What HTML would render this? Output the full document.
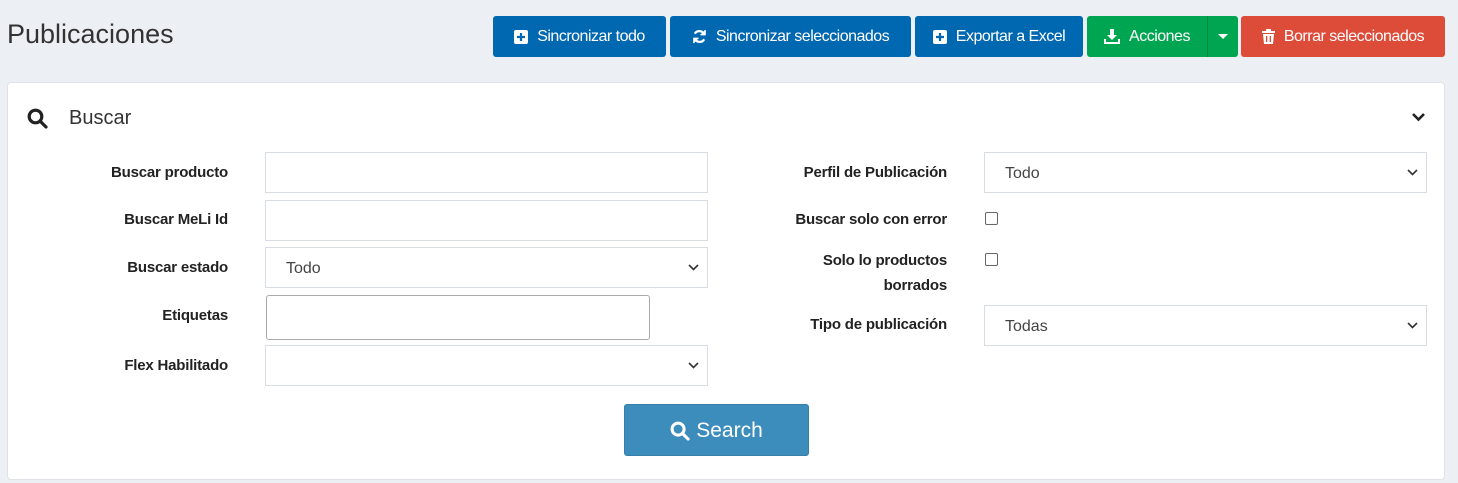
<!DOCTYPE html>
<html><head><meta charset="utf-8"><style>
*{box-sizing:border-box;margin:0;padding:0}
body{width:1458px;height:483px;background:#eceff4;font-family:"Liberation Sans",sans-serif;position:relative;overflow:hidden;color:#222}
.a{position:absolute}
.btn{position:absolute;top:16px;height:41px;color:#fff;font-size:16px;display:flex;align-items:center;justify-content:center;gap:9px;border-radius:3px;letter-spacing:-0.5px}
.blue{background:#0067b1}
.green{background:#00a551}
.red{background:#dd4b39}
.card{position:absolute;left:7px;top:82px;width:1438px;height:398px;background:#fff;border:1px solid #dfe3e8;border-radius:4px}
.lbl{position:absolute;font-weight:bold;font-size:15px;text-align:right;color:#222;letter-spacing:-0.2px;line-height:25px}
.inp{position:absolute;border:1px solid #d8dce3;background:#fff;font-size:16px;color:#444;padding-left:20px;display:flex;align-items:center}
.chev{position:absolute;right:8px;top:50%;margin-top:-4px}
.cb{position:absolute;width:13px;height:13px;border:1px solid #666;border-radius:2px;background:#fff}
</style></head><body>
<div class="a" style="left:7px;top:19px;font-size:27px;color:#333">Publicaciones</div>

<div class="btn blue" style="left:493px;width:173px"><svg width="14" height="14" viewBox="0 0 14 14"><rect width="14" height="14" rx="2" fill="#fff"/><path d="M7 3v8M3 7h8" stroke="#0067b1" stroke-width="2.2"/></svg>Sincronizar todo</div>
<div class="btn blue" style="left:670px;width:241px"><svg width="15" height="15" viewBox="0 0 16 16" fill="none" stroke="#fff" stroke-width="2.4"><path d="M13 6A5.5 5.5 0 0 0 3 5"/><path d="M3 10a5.5 5.5 0 0 0 10 1"/><path d="M14 1v5h-5" fill="#fff" stroke-width="1.5"/><path d="M2 15v-5h5" fill="#fff" stroke-width="1.5"/></svg>Sincronizar seleccionados</div>
<div class="btn blue" style="left:915px;width:168px"><svg width="14" height="14" viewBox="0 0 14 14"><rect width="14" height="14" rx="2" fill="#fff"/><path d="M7 3v8M3 7h8" stroke="#0067b1" stroke-width="2.2"/></svg>Exportar a Excel</div>
<div class="btn green" style="left:1087px;width:120px;border-radius:3px 0 0 3px"><svg width="16" height="15" viewBox="0 0 16 15" fill="#fff"><path d="M6 0h4v6h3l-5 5-5-5h3z"/><path d="M0 10h2v3h12v-3h2v5H0z"/></svg>Acciones</div>
<div class="btn green" style="left:1207px;width:31px;border-left:1px solid #00873f;border-radius:0 3px 3px 0"><svg width="10" height="6" viewBox="0 0 10 6"><path d="M0 0h10L5 5z" fill="#fff"/></svg></div>
<div class="btn red" style="left:1241px;width:204px"><svg width="13" height="15" viewBox="0 0 13 15" fill="#fff"><path d="M4 0h5v2h4v2H0V2h4z"/><path d="M1 5h11l-1 10H2zM4 7v6h1.3V7zm3.7 0v6H9V7z" fill-rule="evenodd"/></svg>Borrar seleccionados</div>

<div class="card"></div>
<svg class="a" style="left:27px;top:108px" width="21" height="21" viewBox="0 0 21 21" fill="none" stroke="#222" stroke-width="3.2"><circle cx="8.5" cy="8.5" r="6.3"/><path d="M13 13l6 6" stroke-linecap="round"/></svg>
<div class="a" style="left:69px;top:107px;font-size:20px;color:#333">Buscar</div>
<svg class="a" style="left:1411px;top:112px" width="15" height="10" viewBox="0 0 15 10" fill="none" stroke="#222" stroke-width="2.6"><path d="M2 2l5.5 5.5L13 2"/></svg>

<div class="lbl" style="left:20px;width:208px;top:160px">Buscar producto</div>
<div class="inp" style="left:265px;top:152px;width:443px;height:41px"></div>
<div class="lbl" style="left:20px;width:208px;top:207px">Buscar MeLi Id</div>
<div class="inp" style="left:265px;top:200px;width:443px;height:41px"></div>
<div class="lbl" style="left:20px;width:208px;top:255px">Buscar estado</div>
<div class="inp" style="left:265px;top:247px;width:443px;height:41px;padding-top:2px">Todo<svg class="chev" width="11" height="7" viewBox="0 0 11 7" fill="none" stroke="#333" stroke-width="1.6"><path d="M1 1l4.5 4.5L10 1"/></svg></div>
<div class="lbl" style="left:20px;width:208px;top:303px">Etiquetas</div>
<div class="inp" style="left:266px;top:295px;width:384px;height:45px;border:1px solid #aaa;border-radius:3px"></div>
<div class="lbl" style="left:20px;width:208px;top:353px">Flex Habilitado</div>
<div class="inp" style="left:265px;top:345px;width:443px;height:41px"><svg class="chev" width="11" height="7" viewBox="0 0 11 7" fill="none" stroke="#333" stroke-width="1.6"><path d="M1 1l4.5 4.5L10 1"/></svg></div>

<div class="lbl" style="left:720px;width:227px;top:160px">Perfil de Publicación</div>
<div class="inp" style="left:984px;top:152px;width:443px;height:41px;padding-top:2px">Todo<svg class="chev" width="11" height="7" viewBox="0 0 11 7" fill="none" stroke="#333" stroke-width="1.6"><path d="M1 1l4.5 4.5L10 1"/></svg></div>
<div class="lbl" style="left:720px;width:227px;top:207px">Buscar solo con error</div>
<div class="cb" style="left:985px;top:212px"></div>
<div class="lbl" style="left:720px;width:227px;top:248px">Solo lo productos<br>borrados</div>
<div class="cb" style="left:985px;top:253px"></div>
<div class="lbl" style="left:720px;width:227px;top:312px">Tipo de publicación</div>
<div class="inp" style="left:984px;top:305px;width:443px;height:41px;padding-top:2px">Todas<svg class="chev" width="11" height="7" viewBox="0 0 11 7" fill="none" stroke="#333" stroke-width="1.6"><path d="M1 1l4.5 4.5L10 1"/></svg></div>

<div class="a" style="left:624px;top:404px;width:185px;height:52px;background:#3c8dbc;border:1px solid #367fa9;border-radius:3px;color:#fff;font-size:21px;display:flex;align-items:center;justify-content:center;gap:6px;padding-top:2px"><svg width="20" height="20" viewBox="0 0 21 21" fill="none" stroke="#fff" stroke-width="3.2"><circle cx="8.5" cy="8.5" r="6.3"/><path d="M13 13l6 6" stroke-linecap="round"/></svg>Search</div>
</body></html>
